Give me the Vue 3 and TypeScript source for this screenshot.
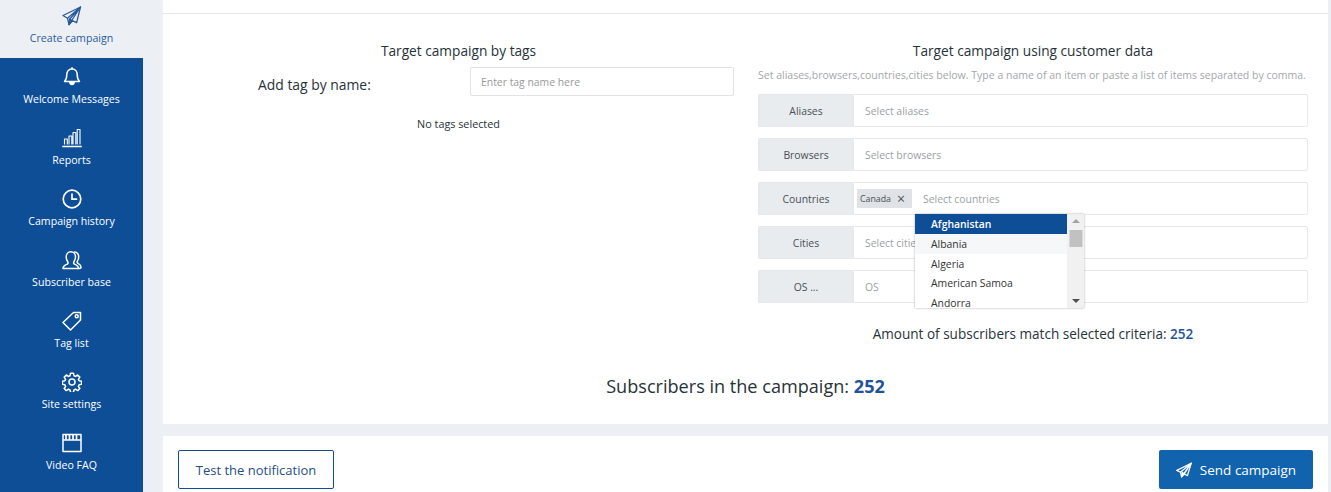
<script setup lang="ts">
const fields = [
  { label: 'Aliases', placeholder: 'Select aliases' },
  { label: 'Browsers', placeholder: 'Select browsers' },
  { label: 'Countries', placeholder: 'Select countries', chip: 'Canada' },
  { label: 'Cities', placeholder: 'Select cities' },
  { label: 'OS ...', placeholder: 'OS' },
]
const countries = ['Afghanistan', 'Albania', 'Algeria', 'American Samoa', 'Andorra']
const nav = [
  { label: 'Welcome Messages', icon: 'bell' },
  { label: 'Reports', icon: 'bars' },
  { label: 'Campaign history', icon: 'clock' },
  { label: 'Subscriber base', icon: 'users' },
  { label: 'Tag list', icon: 'tag' },
  { label: 'Site settings', icon: 'gear' },
  { label: 'Video FAQ', icon: 'film' },
]
</script>

<template>
  <div class="page">
    <aside class="side">
      <div class="nav-item active">
        <svg class="icon" viewBox="0 0 20 20" fill="none" stroke="currentColor" stroke-width="1.300" stroke-linejoin="round">
          <path d="M18.500 1 1 9.500l4.500 2.700 1.500 6.300 3.300-3.800 4.300 2z" />
          <path d="M18.500 1 5.500 12.200M18.500 1 7 18.500l.8-5.500z" />
          <path d="M7 18.500l.8-5.500 2.500 1.700z" fill="currentColor" />
        </svg>
        <span>Create campaign</span>
      </div>
      <div class="nav-blue">
        <div v-for="n in nav" :key="n.label" class="nav-item">
          <svg class="icon" viewBox="0 0 20 20" fill="none" stroke="currentColor" stroke-width="1.500" stroke-linejoin="round" stroke-linecap="round">
            <template v-if="n.icon === 'bell'">
              <path d="M10 2C6.400 2 4.800 4.800 4.800 7.500c0 3.500-.8 5.500-2.300 7h15c-1.500-1.500-2.300-3.500-2.300-7C15.200 4.800 13.600 2 10 2z" />
              <path d="M10 .8V2" />
              <path d="M7.800 15.500c.4 2.800 4 2.800 4.400 0z" fill="currentColor" />
            </template>
            <template v-else-if="n.icon === 'bars'">
              <path d="M.8 18.500h18.400" />
              <path d="M2.500 16v-5h2.800v5M7 16V8h2.800v8M11 16V4.500h2.800V16M15.200 16V1.500h2.800V16" stroke-width="1.100" />
            </template>
            <template v-else-if="n.icon === 'clock'">
              <circle cx="10" cy="10" r="8.800" stroke-width="1.700" />
              <path d="M10 5v5.200h4.500" stroke-width="1.700" />
            </template>
            <template v-else-if="n.icon === 'users'">
              <path d="M1 18.500c0-3 2-3.500 4-4.300 1.300-.6 1.400-1.500.6-2.700C4.600 10 4.200 8.700 4.200 7c0-3 2-5.200 4.600-5.200S13.500 4 13.500 7c0 1.700-.5 3-1.400 4.500-.8 1.200-.7 2.100.6 2.700 2 .8 3.800 1.300 3.800 4.300z" />
              <path d="M12.500 2c2.500.3 4.200 2.300 4.200 5 0 1.700-.5 3-1.300 4.300-.6 1 0 1.800 1 2.300 1.300.6 2.600 1.200 2.600 3.400 0 1-.8 1.500-2 1.500" />
            </template>
            <template v-else-if="n.icon === 'tag'">
              <path d="M11.500 1.500h7v7.500L8.500 19 1 11.500z" />
              <circle cx="14.700" cy="5.300" r="1.500" />
            </template>
            <template v-else-if="n.icon === 'gear'">
              <circle cx="10" cy="10" r="3" />
              <path d="M8.500 1.200h3l.5 2.500 1.500.7 2.200-1.400 2.100 2.100-1.400 2.200.7 1.500 2.500.5v3l-2.500.5-.7 1.500 1.400 2.200-2.100 2.100-2.200-1.400-1.500.7-.5 2.500h-3l-.5-2.500-1.500-.7-2.200 1.400-2.100-2.100 1.400-2.200-.7-1.500-2.500-.5v-3l2.500-.5.7-1.500-1.400-2.200 2.100-2.100 2.200 1.400 1.500-.7z" />
            </template>
            <template v-else>
              <path d="M1 1.500h18v17H1zM1 7h18" />
              <path d="M4 2v4M7.500 2v4M11 2v4M14.500 2v4" stroke-width="1.800" stroke-dasharray="2 1" />
            </template>
          </svg>
          <span>{{ n.label }}</span>
        </div>
      </div>
    </aside>

    <main class="main">
      <section class="panel">
        <div class="top-line"></div>
        <div class="cols">
          <div class="col-left">
            <h3 class="title">Target campaign by tags</h3>
            <div class="tag-row">
              <label class="tag-label">Add tag by name:</label>
              <div class="tag-input">Enter tag name here</div>
            </div>
            <p class="none">No tags selected</p>
          </div>
          <div class="col-right">
            <h3 class="title">Target campaign using customer data</h3>
            <p class="hint">Set aliases,browsers,countries,cities below. Type a name of an item or paste a list of items separated by comma.</p>
            <div v-for="f in fields" :key="f.label" class="field">
              <div class="field-label">{{ f.label }}</div>
              <div class="field-box" :class="{ 'with-chip': f.chip }">
                <span v-if="f.chip" class="chip">{{ f.chip }}<i class="x">×</i></span>
                <span class="ph">{{ f.placeholder }}</span>
                <div v-if="f.chip" class="dropdown">
                  <div class="list">
                    <div
                      v-for="(c, i) in countries"
                      :key="c"
                      class="opt"
                      :class="{ sel: i === 0, hov: i === 1 }"
                    >{{ c }}</div>
                  </div>
                  <div class="scroll">
                    <span class="up"></span>
                    <span class="thumb"></span>
                    <span class="down"></span>
                  </div>
                </div>
              </div>
            </div>
            <p class="amount">Amount of subscribers match selected criteria: <b>252</b></p>
          </div>
        </div>
        <p class="total">Subscribers in the campaign: <b>252</b></p>
      </section>

      <section class="actions">
        <button class="btn-outline">Test the notification</button>
        <button class="btn-send">
          <svg class="send-ic" viewBox="0 0 20 20" fill="none" stroke="currentColor" stroke-width="1.600" stroke-linejoin="round">
            <path d="M19 1.500 1 10.500l4.500 2.300 1.500 5.700 3.300-3.500 4 2z" />
            <path d="M19 1.500 5.500 12.800M19 1.500 7 18.500l.8-5.500 2.500 1.800z" fill="currentColor" />
          </svg>
          Send campaign
        </button>
      </section>
    </main>
  </div>
</template>

<style>
html, body { margin: 0; padding: 0; background: #ecf0f5; overflow: hidden; }
</style>

<style scoped>
.page {
  width: 1331px;
  height: 492px;
  display: flex;
  background: #ecf0f5;
  font-family: "Open Sans", "Noto Sans", sans-serif;
  color: #263238;
  overflow: hidden;
}
.side { width: 143px; flex: none; margin-right: 20px; }
.nav-blue { background: #0e4e96; height: 434px; }
.nav-item {
  height: 61px;
  box-sizing: border-box;
  display: flex;
  flex-direction: column;
  align-items: center;
  color: #fff;
  font-size: 10.600px;
  padding-top: 9px;
}
.nav-item.active { height: 58px; color: #2a5a9c; padding-top: 6px; }
.nav-item span { margin-top: 4px; line-height: 16px; white-space: nowrap; }
.icon { width: 20px; height: 20px; display: block; }
.main { flex: none; width: 1165px; display: flex; flex-direction: column; }
.panel { background: #fff; height: 424px; box-sizing: border-box; }
.top-line { height: 13px; border-bottom: 1px solid #e6e8eb; }
.cols { display: flex; }
.col-left { width: 571px; margin-right: 24px; padding-top: 28px; flex: none; }
.col-right { width: 550px; padding-top: 28px; flex: none; }
.title {
  margin: 0;
  font-weight: 400;
  font-size: 13.700px;
  line-height: 18px;
  text-align: center;
  color: #263238;
}
.col-left .title { width: 591px; }
.tag-row { display: flex; align-items: center; margin-top: 6px; height: 30px; }
.tag-label { margin-left: 95px; width: 212px; flex: none; font-size: 13.900px; padding-top: 6px; }
.tag-input {
  width: 264px;
  height: 29px;
  box-sizing: border-box;
  border: 1px solid #e0e3e7;
  border-radius: 2px;
  font-size: 10.400px;
  line-height: 29px;
  padding-left: 10px;
  color: #9a9a9a;
}
.none { margin: 20px 0 0; width: 591px; text-align: center; font-size: 10.800px; line-height: 16px; }
.hint {
  margin: 7px 0 11px;
  font-size: 10.530px;
  line-height: 16px;
  color: #a3a7ab;
  white-space: nowrap;
}
.field { display: flex; height: 33px; margin-bottom: 11px; }
.field-label {
  width: 95px;
  flex: none;
  background: #e9ecef;
  border: 1px solid #e6e8eb;
  border-right: 0;
  border-radius: 2px 0 0 2px;
  box-sizing: border-box;
  text-align: center;
  font-size: 10.400px;
  line-height: 33px;
  color: #495057;
}
.field-box {
  flex: 1;
  position: relative;
  border: 1px solid #e6e8eb;
  border-radius: 0 2px 2px 0;
  box-sizing: border-box;
  display: flex;
  align-items: center;
  padding-left: 11px;
  font-size: 10.400px;
}
.field-box.with-chip { padding-left: 3px; }
.ph { color: #9a9fa4; }
.chip {
  background: #dfe2e6;
  height: 19px;
  line-height: 20px;
  font-size: 8.800px;
  padding: 0 7px 0 3px;
  margin-right: 11px;
  display: flex;
  color: #495057;
  width: 45px;
  justify-content: space-between;
}
.x { font-style: normal; font-size: 14px; color: #555; }
.dropdown {
  position: absolute;
  left: 61px;
  top: 31px;
  width: 169px;
  height: 94px;
  background: #fff;
  display: flex;
  z-index: 3;
  overflow: hidden;
  box-shadow: 0 0 2px rgba(0, 0, 0, 0.35);
}
.list { flex: 1; }
.opt {
  height: 19.500px;
  line-height: 20px;
  padding-left: 16px;
  font-size: 10.400px;
  color: #333;
}
.opt.sel { background: #0e4e96; color: #fff; font-weight: 600; height: 20px; line-height: 20px; }
.opt.hov { background: #f5f7f9; }
.scroll { width: 17px; background: #f1f1f1; position: relative; }
.up, .down, .thumb { position: absolute; left: 50%; transform: translateX(-50%); }
.up { top: 5px; border: 4px solid transparent; border-top: 0; border-bottom: 4px solid #a3a3a3; }
.down { bottom: 5px; border: 4px solid transparent; border-bottom: 0; border-top: 4px solid #505050; }
.thumb { top: 16px; width: 13px; height: 17px; background: #c1c1c1; }
.amount { margin: 22px 0 0; text-align: center; font-size: 13.550px; line-height: 18px; }
b { color: #1f5596; font-weight: 700; }
.amount b { font-weight: 600; }
.total { margin: 31px 0 0; width: 1165px; text-align: center; font-size: 18.100px; line-height: 24px; }
.actions {
  margin-top: 12px;
  background: #fff;
  flex: 1;
  display: flex;
  justify-content: space-between;
  align-items: flex-start;
  padding: 14px 15px 0 15px;
}
button { font-family: inherit; cursor: pointer; box-sizing: border-box; }
.btn-outline {
  width: 156px;
  height: 39px;
  background: #fff;
  border: 1px solid #0e4e96;
  border-radius: 2px;
  font-size: 13px;
  color: #1f4f86;
}
.btn-send {
  width: 154px;
  height: 39px;
  background: #1163ae;
  color: #fff;
  border: 0;
  border-radius: 2px;
  font-size: 13.500px;
  display: flex;
  align-items: center;
  justify-content: center;
  gap: 8px;
}
.send-ic { width: 16px; height: 16px; }
</style>
